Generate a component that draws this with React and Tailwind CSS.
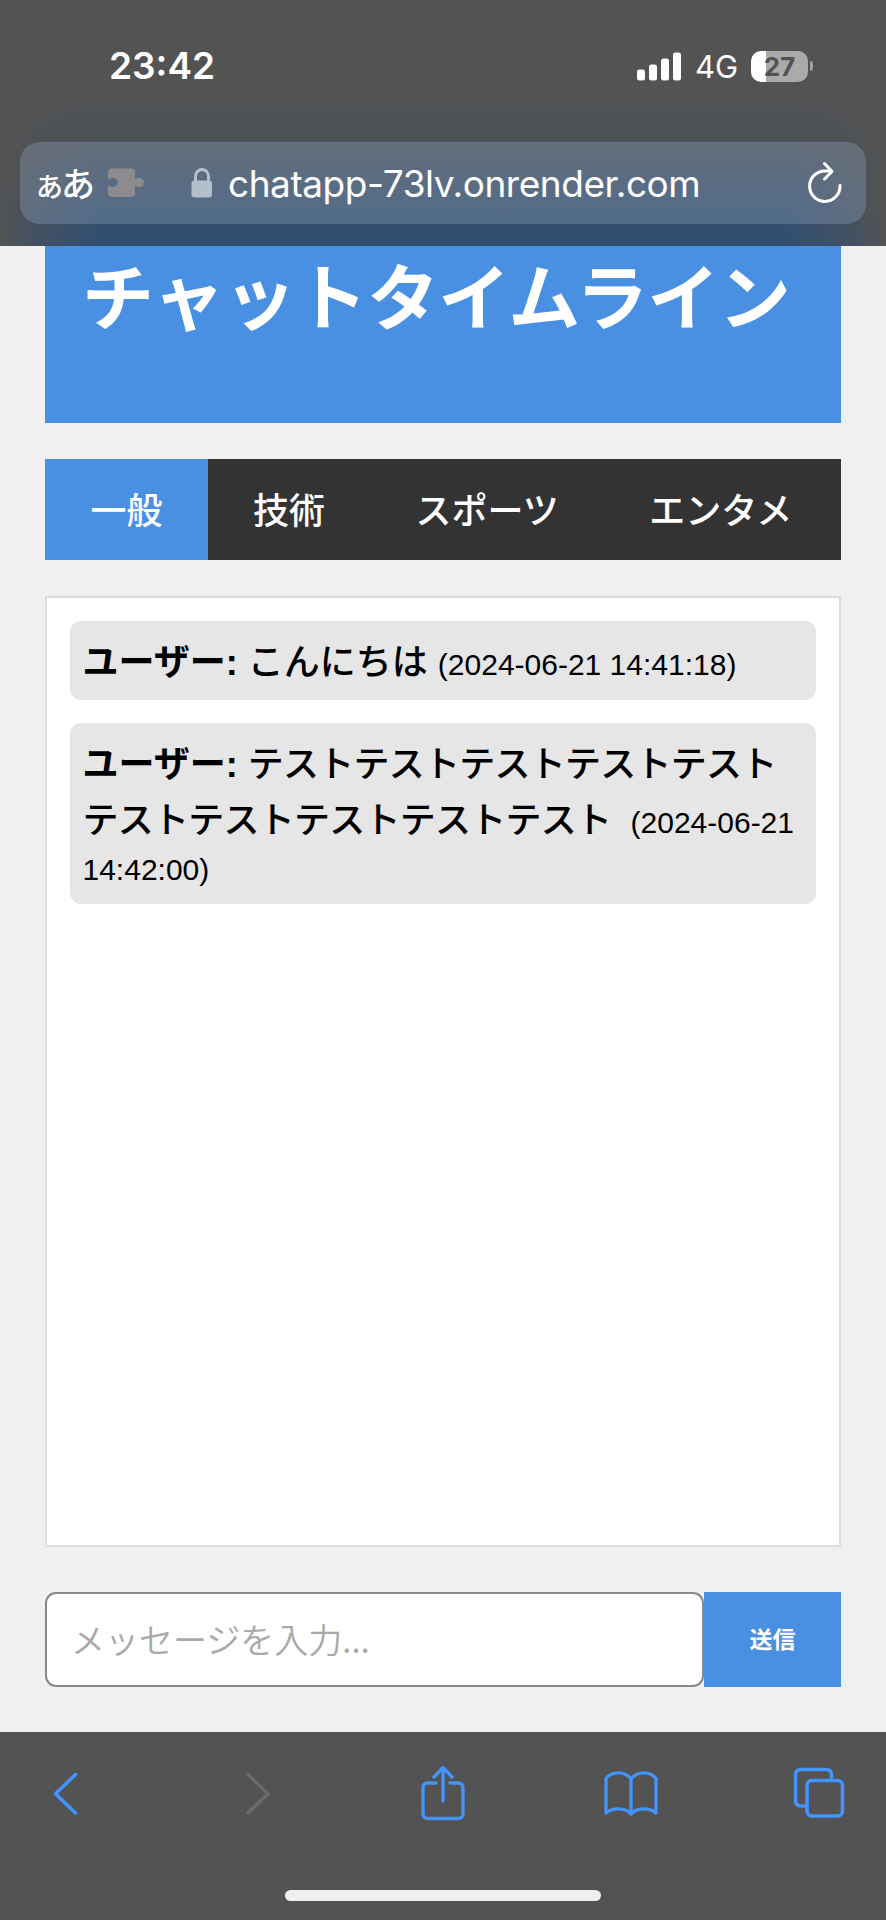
/**
 * Chat timeline page inside a mobile browser frame
 */

const tabs = ['一般', '技術', 'スポーツ', 'エンタメ'];

const messages = [
  { id: 1, user: 'ユーザー', text: 'こんにちは', time: '2024-06-21 14:41:18' },
  {
    id: 2,
    user: 'ユーザー',
    text: 'テストテストテストテストテストテストテストテストテストテスト\u00a0',
    time: '2024-06-21 14:42:00',
    long: true,
  },
];

function StatusBar() {
  return (
    <div className="flex h-[142px] items-start justify-between pl-[109px] pr-[73px] pt-[43px]">
      <span className="font-['Inter',sans-serif] text-[37px] font-semibold leading-[46px] text-white">23:42</span>
      <div className="flex h-[46px] items-center">
        <svg className="-mt-[1px] h-[30px] w-[46px]" viewBox="0 0 46 30" fill="#fff">
          <rect x="1" y="18.5" width="8" height="11" rx="2.5" />
          <rect x="13" y="13.5" width="8" height="16" rx="2.5" />
          <rect x="25" y="7.5" width="8" height="22" rx="2.5" />
          <rect x="37" y="1.5" width="8" height="28" rx="2.5" />
        </svg>
        <span className="ml-[13px] mt-[2px] w-[44px] font-['Inter',sans-serif] text-[31px] leading-[40px] text-white">4G</span>
        <div className="ml-[12px] flex items-center">
          <div className="flex h-[31px] w-[57px] items-center justify-center rounded-[10px] bg-linear-to-r from-white from-27% to-[#aaaaaa] to-27% pt-[1px] font-['Inter',sans-serif] text-[26px] font-bold leading-none text-[#535353]">
            27
          </div>
          <div className="ml-[2px] h-[10px] w-[3px] rounded-r-full bg-[#a0a0a0]" />
        </div>
      </div>
    </div>
  );
}

function AddressBar() {
  return (
    <div className="mx-[20px] flex h-[82px] items-center rounded-[20px] bg-[#afc8eb]/24 text-white">
      <div className="ml-[16px] flex w-[57px] items-baseline font-['Noto_Sans_CJK_JP',sans-serif] font-medium leading-none">
        <span className="-mr-[2px] text-[27px]">あ</span>
        <span className="text-[34px]">あ</span>
      </div>
      <svg className="ml-[14px] h-[30px] w-[38px]" viewBox="0 0 38 30" fill="#8b8b90">
        <path d="M5 0.500H24q4 0 4 4V10q0 1 1 1l1-.6a4.600 4.600 0 1 1 0 8l-1-.6q-1 0-1 1V25q0 4-4 4H5q-4 0-4-4V18.500q0-1 1.200-.8a5 4.500 0 1 0 0-6.400q-1.200.5-1.200-.8V4.500q0-4 4-4Z" />
      </svg>
      <svg className="ml-[45px] h-[32px] w-[24px]" viewBox="0 0 24 32" fill="none">
        <path d="M5.500 15V9.500a6.500 7 0 0 1 13 0V15" stroke="#bdc3cc" strokeWidth="2.800" />
        <rect x="1.500" y="13.500" width="20.500" height="17" rx="3" fill="#b4bfcd" />
      </svg>
      <span className="ml-[14px] w-[475px] whitespace-nowrap font-['Inter',sans-serif] text-[37px] leading-none tracking-[-0.45px]">
        chatapp-73lv.onrender.com
      </span>
      <svg className="ml-[103px] h-[44px] w-[38px]" viewBox="0 0 38 44" fill="none" stroke="#fff" strokeWidth="3" strokeLinecap="round" strokeLinejoin="round">
        <path d="M34 24.500A15.200 15.200 0 1 1 19 10h6.500" />
        <path d="M18.500 2.500l7.500 8-7.500 7.500" />
      </svg>
    </div>
  );
}

function MessageCard({ message }) {
  return (
    <p
      className={`rounded-[11px] bg-[#e6e6e6] px-[12.5px] pt-[14px] text-[36px] leading-[38px] text-black ${
        message.long ? 'pb-[15px]' : 'pb-[9px]'
      }`}
    >
      <strong className="leading-[56px]">{message.user}:</strong>{' '}
      <span className={`font-medium leading-[56px] ${message.long ? 'tracking-[-0.75px]' : ''}`}>{message.text}</span>{' '}
      <span className="text-[30px]">({message.time})</span>
    </p>
  );
}

function Toolbar() {
  return (
    <footer className="flex h-[188px] flex-col items-center bg-[#535353]">
      <div className="flex h-[122px] w-full items-center justify-between px-[39px]">
        <svg className="h-[44px] w-[56px]" viewBox="-12.500 0 56 44" fill="none" stroke="#4394ff" strokeWidth="3.500" strokeLinecap="round" strokeLinejoin="round">
          <path d="M24 3.500L4 22.700L24 42" />
        </svg>
        <svg className="h-[44px] w-[56px]" viewBox="-17 0 56 44" fill="none" stroke="#6a6a6c" strokeWidth="3.500" strokeLinecap="round" strokeLinejoin="round">
          <path d="M4 3.500L24 22.700L4 42" />
        </svg>
        <svg className="h-[56px] w-[56px]" viewBox="-5 0 56 56" fill="none" stroke="#4394ff" strokeWidth="3.300" strokeLinecap="round" strokeLinejoin="round">
          <path d="M16 18H8q-5 0-5 5V48.500q0 5 5 5H38q5 0 5-5V23q0-5-5-5H30" />
          <path d="M23 36V3M14 12l9-9.500 9 9.500" />
        </svg>
        <svg className="h-[46px] w-[56px]" viewBox="0 0 56 46" fill="none" stroke="#4394ff" strokeWidth="3.300" strokeLinecap="round" strokeLinejoin="round">
          <path d="M28 9C22 1 9 1 3 8.500V43C9 37.500 22 37 28 44C34 37 47 37.500 53 43V8.500C47 1 34 1 28 9ZV44" />
        </svg>
        <svg className="h-[52px] w-[56px]" viewBox="-2 0 56 52" fill="none" stroke="#4394ff" strokeWidth="3.500">
          <path d="M13 39H8q-5.500 0-5.500-5.500V8q0-5.500 5.500-5.500H33q5.500 0 5.500 5.500V13" />
          <rect x="14" y="13.500" width="35.500" height="35.500" rx="5" />
        </svg>
      </div>
      <div className="mt-[36px] h-[11px] w-[316px] rounded-full bg-[#efefef]" />
    </footer>
  );
}

export default function App() {
  return (
    <div className="flex h-[1920px] w-[886px] flex-col overflow-hidden bg-[#f0f0f0] font-['Liberation_Sans','Noto_Sans_CJK_JP',sans-serif]">
      <header className="h-[246px] shrink-0 bg-[linear-gradient(to_right,#535353_0%,rgba(83,83,83,0.5)_4%,rgba(83,83,83,0)_11%,rgba(83,83,83,0)_89%,rgba(83,83,83,0.5)_96%,#535353_100%),linear-gradient(to_bottom,#535353_35%,#4a5159_60%,#314f71_96%)]">
        <StatusBar />
        <AddressBar />
      </header>

      <main className="flex flex-1 flex-col px-[45px]">
        <h1 className="h-[177px] whitespace-nowrap bg-[#4a90e2] pl-[37px] pt-[1px] text-[72px] font-bold leading-[104px] tracking-[-0.6px] text-white">
          チャットタイムライン
        </h1>

        <nav className="mt-[36px] flex h-[101px] bg-[#333333] text-[36px] leading-[105px] text-white">
          {tabs.map((tab, i) => (
            <a key={tab} className={`pl-[45.500px] pr-[45px] font-medium ${i === 0 ? 'bg-[#4a90e2]' : ''}`}>
              {tab}
            </a>
          ))}
        </nav>

        <section className="mt-[36px] flex h-[951px] flex-col gap-[23px] border-[2.500px] border-[#dddddd] bg-white px-[23px] py-[23px]">
          {messages.map((message) => (
            <MessageCard key={message.id} message={message} />
          ))}
        </section>

        <form className="mt-[45px] flex h-[95px]">
          <input
            type="text"
            placeholder="メッセージを入力..."
            className="w-[659px] rounded-[11px] border-2 border-[#85888c] bg-white px-[24px] pb-[3px] font-['Noto_Sans_CJK_JP',sans-serif] text-[34px] font-[350] placeholder:text-[#a9a9a9]"
          />
          <button type="button" className="flex-1 bg-[#4a90e2] pt-[2px] text-[23px] font-bold text-white">
            送信
          </button>
        </form>
      </main>

      <Toolbar />
    </div>
  );
}
